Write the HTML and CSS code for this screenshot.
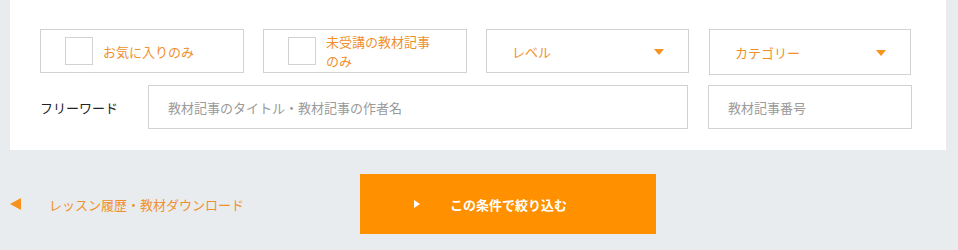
FILE: index.html
```html
<!DOCTYPE html>
<html lang="ja">
<head>
<meta charset="utf-8">
<link rel="stylesheet" href="styles.css">
</head>
<body>
<form class="panel">
  <div class="row-top">
    <label class="box check-box">
      <span class="check"></span>
      <span class="box-text">お気に入りのみ</span>
    </label>
    <label class="box check-box">
      <span class="check"></span>
      <span class="box-text wrap">未受講の教材記事のみ</span>
    </label>
    <div class="box select-box">
      <span class="box-text">レベル</span>
      <span class="caret"></span>
    </div>
    <div class="box select-box tall">
      <span class="box-text">カテゴリー</span>
      <span class="caret"></span>
    </div>
  </div>
  <div class="row-bottom">
    <span class="label">フリーワード</span>
    <div class="input wide"><span class="placeholder">教材記事のタイトル・教材記事の作者名</span></div>
    <div class="input narrow"><span class="placeholder">教材記事番号</span></div>
  </div>
</form>
<div class="footer">
  <a class="back-link"><span class="back-arrow"></span><span class="back-text">レッスン履歴・教材ダウンロード</span></a>
  <button class="submit"><span class="play"></span><span class="submit-text">この条件で絞り込む</span></button>
</div>
</body>
</html>
```
FILE: styles.css
```css
* { box-sizing: border-box; }
html, body {
  margin: 0;
  padding: 0;
}
body {
  background: #e9ecef;
  font-family: "Noto Sans CJK JP", "Noto Sans", sans-serif;
  font-size: 13px;
  width: 958px;
  height: 250px;
  overflow: hidden;
}
.panel {
  margin: 0 12px 0 10px;
  background: #fff;
  height: 150px;
  padding: 29px 34px 0 30px;
}
.row-top {
  display: grid;
  grid-template-columns: 204px 204px 203px 203px;
  column-gap: 19px;
  align-items: start;
}
.row-top .box:nth-child(4) { margin-left: 1px; }
.box {
  height: 44px;
  border: 1px solid #d2d2d2;
  display: flex;
  align-items: center;
  color: #f0902c;
}
.box.tall { height: 46px; }
.check-box { padding-left: 24px; padding-right: 20px; }
.check {
  width: 28px;
  height: 28px;
  border: 1px solid #d2d2d2;
  flex: none;
  margin-right: 10px;
}
.box-text {
  line-height: 19px;
}
.box-text.wrap { max-width: 110px; }
.select-box {
  padding: 0 24px 0 25px;
  justify-content: space-between;
}
.caret {
  width: 0;
  height: 0;
  border-left: 5px solid transparent;
  border-right: 5px solid transparent;
  border-top: 6px solid #f7921e;
  margin-top: 1px;
}
.row-bottom {
  display: flex;
  align-items: center;
  margin-top: 10px;
}
.label {
  width: 108px;
  color: #222;
  flex: none;
}
.input {
  height: 44px;
  border: 1px solid #d2d2d2;
  display: flex;
  align-items: center;
  padding-left: 19px;
  flex: none;
}
.input.wide { width: 540px; margin-right: 20px; }
.input.narrow { width: 204px; }
.placeholder { color: #9a9a9a; }
.footer {
  display: flex;
  align-items: center;
  padding: 24px 0 0 10px;
}
.back-link {
  width: 350px;
  display: flex;
  align-items: center;
  color: #f0902c;
}
.back-arrow {
  width: 0;
  height: 0;
  border-top: 6.5px solid transparent;
  border-bottom: 6.5px solid transparent;
  border-right: 11px solid #f7921e;
  margin-right: 28px;
}
.submit {
  width: 296px;
  height: 60px;
  background: #ff9100;
  border: none;
  display: flex;
  align-items: center;
  padding: 0 0 0 54px;
  font: inherit;
  font-weight: bold;
  color: #fff;
}
.play {
  width: 0;
  height: 0;
  border-top: 4px solid transparent;
  border-bottom: 4px solid transparent;
  border-left: 6px solid #fff;
  margin-right: 30px;
}
```
